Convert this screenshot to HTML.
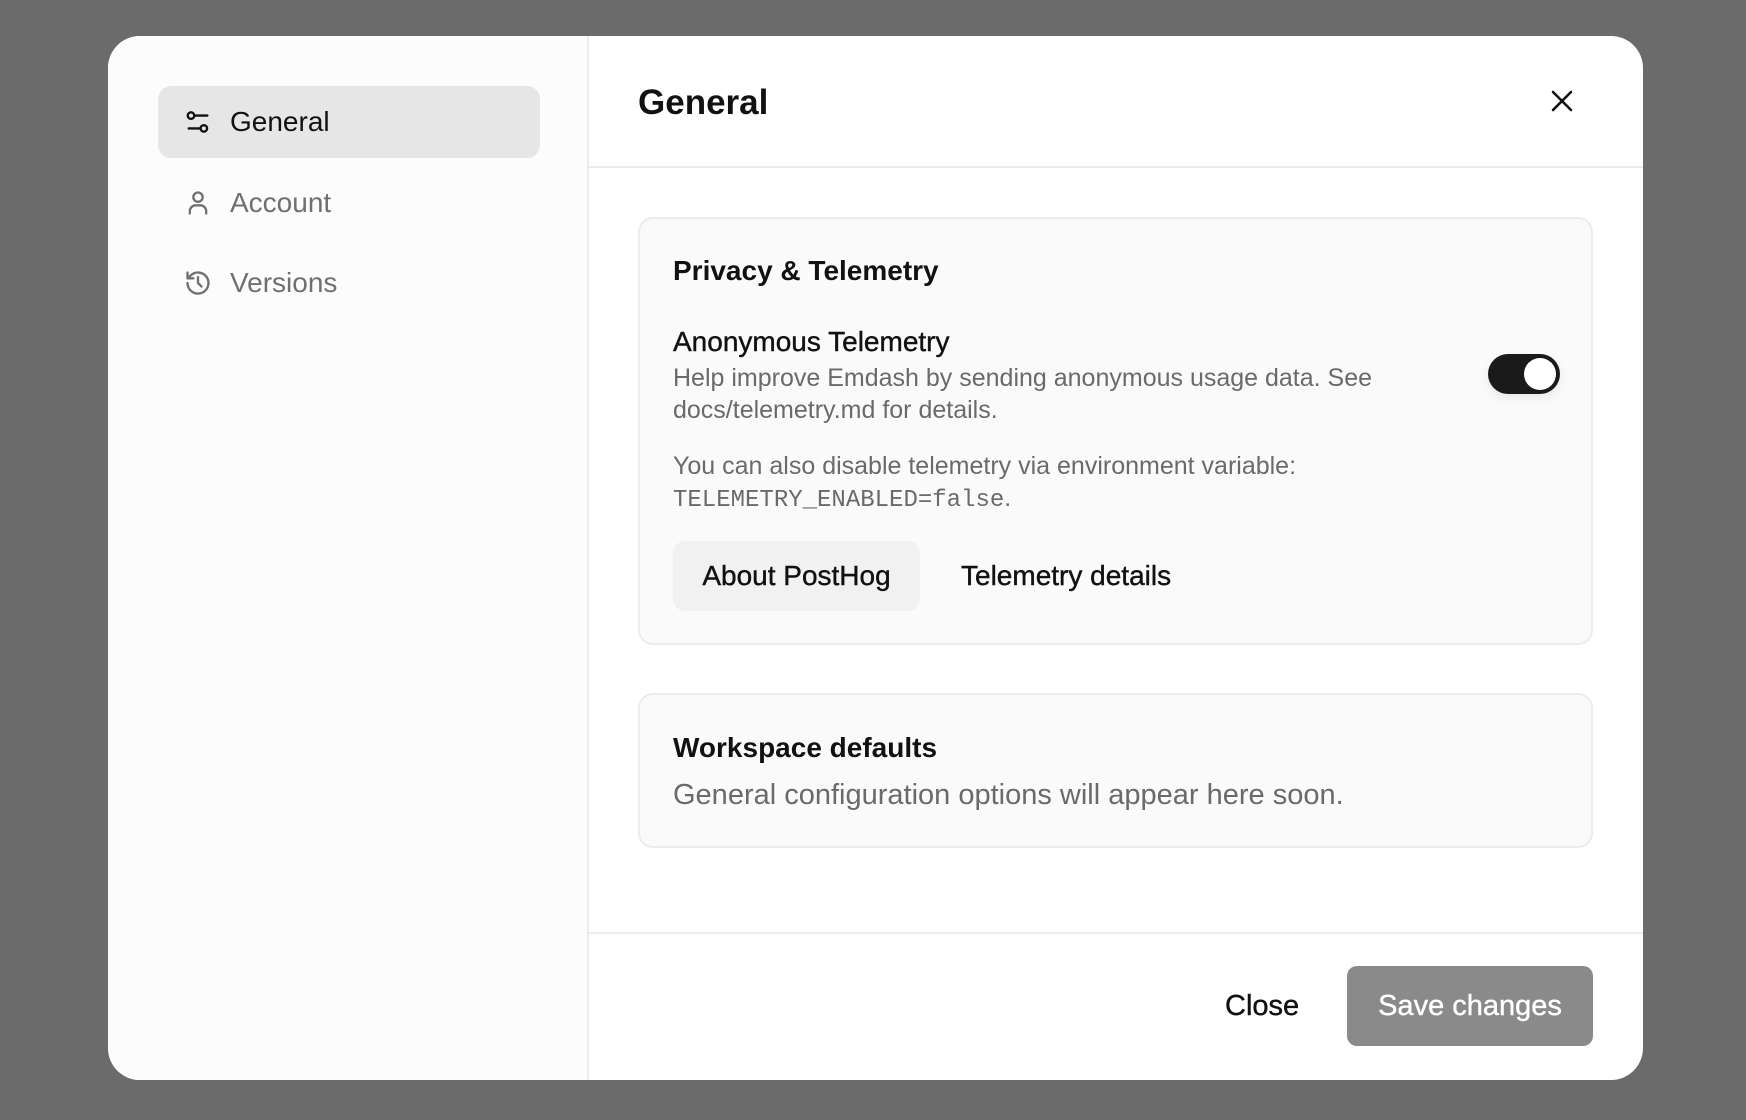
<!DOCTYPE html>
<html><head><meta charset="utf-8"><style>
*{box-sizing:border-box;margin:0;padding:0}
body{width:1746px;height:1120px;background:#6b6b6b;font-family:"Liberation Sans",sans-serif;position:relative;overflow:hidden}
.modal{position:absolute;left:108px;top:36px;width:1535px;height:1044px;background:#fff;border-radius:32px;overflow:hidden}
.side{position:absolute;left:0;top:0;width:481px;height:100%;background:#fcfcfc;border-right:2px solid #ececec}
.nav{position:absolute;left:50px;width:382px;height:72px;border-radius:13px;display:flex;align-items:center;font-size:28px;color:#707070}
.nav.on{background:#e6e6e6;color:#111}
.nav svg{position:absolute;left:26px}
.nav span{position:absolute;left:72px}
.abs{position:absolute}
.card{position:absolute;left:530px;width:955px;background:#fafafa;border:2px solid #ececec;border-radius:15px}
.g{color:#6a6a6a;font-size:25px;line-height:32px}
</style></head><body>
<div class="modal">
 <div class="side">
  <div class="nav on" style="top:50px"><svg width="28" height="28" viewBox="0 0 24 24" fill="none" stroke="#111" stroke-width="2" stroke-linecap="round"><circle cx="6" cy="6.5" r="2.8"/><line x1="8.8" y1="6.5" x2="20" y2="6.5"/><circle cx="17" cy="17.5" r="2.8"/><line x1="4" y1="17.5" x2="14.2" y2="17.5"/></svg><span>General</span></div>
  <div class="nav" style="top:131px"><svg width="28" height="28" viewBox="0 0 24 24" fill="none" stroke="#707070" stroke-width="2" stroke-linecap="round"><circle cx="12" cy="7" r="4"/><path d="M5 21v-2a5 5 0 0 1 5-5h4a5 5 0 0 1 5 5v2"/></svg><span>Account</span></div>
  <div class="nav" style="top:211px"><svg width="28" height="28" viewBox="0 0 24 24" fill="none" stroke="#707070" stroke-width="2" stroke-linecap="round" stroke-linejoin="round"><path d="M3 12a9 9 0 1 0 3-6.7L3 8"/><path d="M3 3v5h5"/><path d="M12 7v5l3 3"/></svg><span>Versions</span></div>
 </div>
 <div class="abs" style="left:530px;top:47px;font-size:35px;font-weight:bold;color:#111">General</div>
 <svg class="abs" style="left:1443px;top:54px" width="22" height="22" viewBox="0 0 22 22" stroke="#111" stroke-width="2.6" stroke-linecap="round"><line x1="2" y1="2" x2="20" y2="20"/><line x1="20" y1="2" x2="2" y2="20"/></svg>
 <div class="abs" style="left:481px;top:130px;width:1054px;height:2px;background:#ececec"></div>
 <div class="card" style="top:181px;height:428px">
  <div class="abs" style="left:33px;top:36px;font-size:28px;font-weight:bold;color:#111">Privacy &amp; Telemetry</div>
  <div class="abs" style="left:33px;top:107px;font-size:28px;color:#111;-webkit-text-stroke:0.4px #111">Anonymous Telemetry</div>
  <div class="abs g" style="left:33px;top:143px;width:760px">Help improve Emdash by sending anonymous usage data. See docs/telemetry.md for details.</div>
  <div class="abs g" style="left:33px;top:231px;width:760px">You can also disable telemetry via environment variable:<br><span style="font-family:'Liberation Mono',monospace;font-size:24px">TELEMETRY_ENABLED=false</span>.</div>
  <div class="abs" style="left:33px;top:322px;width:247px;height:70px;background:#f1f1f1;border-radius:12px;font-size:28px;color:#111;line-height:70px;text-align:center;-webkit-text-stroke:0.4px #111">About PostHog</div>
  <div class="abs" style="left:321px;top:322px;font-size:28px;color:#111;line-height:70px;-webkit-text-stroke:0.4px #111">Telemetry details</div>
  <div class="abs" style="left:848px;top:135px;width:72px;height:40px;border-radius:20px;background:#1a1a1a;box-shadow:0 4px 10px rgba(0,0,0,0.08)"><div style="position:absolute;right:4px;top:4px;width:32px;height:32px;border-radius:50%;background:#fff"></div></div>
 </div>
 <div class="card" style="top:657px;height:155px">
  <div class="abs" style="left:33px;top:37px;font-size:28px;font-weight:bold;color:#111">Workspace defaults</div>
  <div class="abs" style="left:33px;top:84px;font-size:29px;color:#6a6a6a">General configuration options will appear here soon.</div>
 </div>
 <div class="abs" style="left:481px;top:896px;width:1054px;height:2px;background:#ececec"></div>
 <div class="abs" style="left:1117px;top:954px;font-size:29px;color:#111;-webkit-text-stroke:0.4px #111">Close</div>
 <div class="abs" style="left:1239px;top:930px;width:246px;height:80px;background:#8a8a8a;border-radius:10px;color:#fff;font-size:29px;line-height:80px;text-align:center;-webkit-text-stroke:0.4px #fff">Save changes</div>
</div>
</body></html>
